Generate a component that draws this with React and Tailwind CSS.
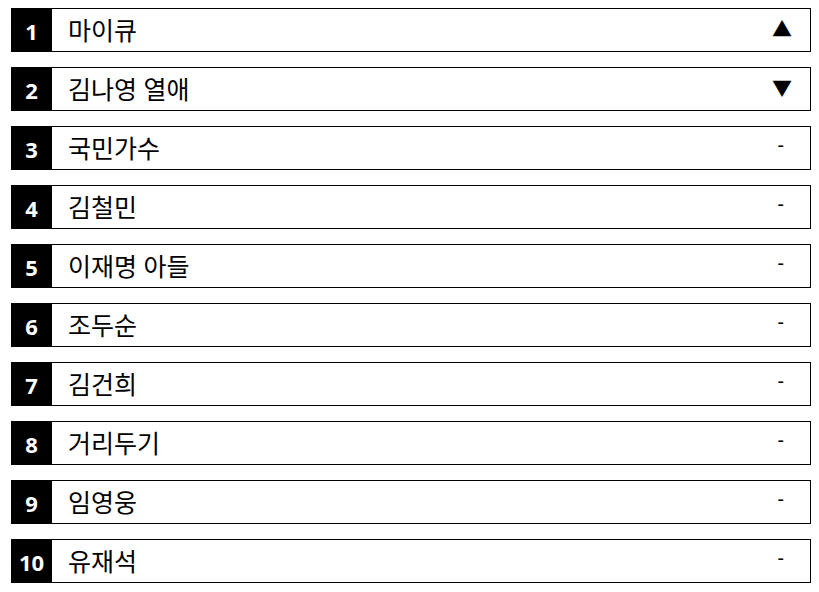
const rows = [
  { rank: 1, name: "마이큐", trend: "up" },
  { rank: 2, name: "김나영 열애", trend: "down" },
  { rank: 3, name: "국민가수", trend: "same" },
  { rank: 4, name: "김철민", trend: "same" },
  { rank: 5, name: "이재명 아들", trend: "same" },
  { rank: 6, name: "조두순", trend: "same" },
  { rank: 7, name: "김건희", trend: "same" },
  { rank: 8, name: "거리두기", trend: "same" },
  { rank: 9, name: "임영웅", trend: "same" },
  { rank: 10, name: "유재석", trend: "same" },
];

function Trend({ trend }) {
  if (trend === "up") {
    return <span className="mr-[18px] text-[20px] leading-none">▲</span>;
  }
  if (trend === "down") {
    return <span className="mr-[18px] text-[20px] leading-none">▼</span>;
  }
  return <span className="mr-[26px] text-[20px] leading-none -mt-[6px]">-</span>;
}

export default function App() {
  return (
    <div
      className="bg-white min-h-screen pt-[8px] pl-[11px]"
      style={{ fontFamily: '"Noto Sans", "Noto Sans CJK KR", sans-serif' }}
    >
      <div className="w-[800px] flex flex-col gap-[15px]">
        {rows.map((r) => (
          <div key={r.rank} className="flex items-center h-[44px] border border-black">
            <div className="w-[41px] -ml-px -my-px h-[44px] bg-black text-white font-bold text-[22px] flex items-center justify-center pt-[3px]">
              {r.rank}
            </div>
            <div className="pl-[16px] text-[25px] text-black leading-none">{r.name}</div>
            <div className="ml-auto flex items-center">
              <Trend trend={r.trend} />
            </div>
          </div>
        ))}
      </div>
    </div>
  );
}
